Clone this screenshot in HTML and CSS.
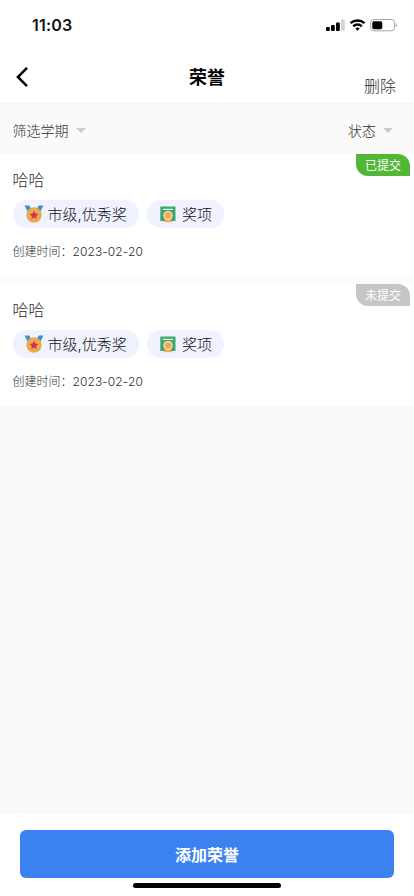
FILE: index.html
```html
<!DOCTYPE html>
<html lang="zh-CN">
<head>
<meta charset="UTF-8">
<meta name="viewport" content="width=device-width, initial-scale=1">
<title>荣誉</title>
<link rel="stylesheet" href="styles.css">
</head>
<body>
<svg width="0" height="0" class="defs">
  <symbol id="medal" viewBox="0 0 20 18">
    <path d="M.6.6h4.6l3.3 5.6-3.7 2.8z M19.4.6h-4.6l-3.3 5.6 3.7 2.8z" fill="#3d8fd1"/>
    <circle cx="10" cy="10" r="7.7" fill="#eba947"/>
    <path d="M10 5.8l1.3 2.7 3 .4-2.2 2.1.5 3-2.6-1.4-2.6 1.4.5-3-2.2-2.1 3-.4z" fill="#d12f59"/>
  </symbol>
  <symbol id="award" viewBox="0 0 16 17">
    <rect x=".3" y=".5" width="15.2" height="14.5" fill="#43a66c"/>
    <path d="M3 3.4h10" stroke="#e8f5ed" stroke-width="1.2"/>
    <path d="M5 12l-1 4.6 2.2-.8 1.8.8 1.8-.8 2.2.8-1-4.6z" fill="#f3a64b"/>
    <circle cx="8" cy="9.5" r="4.6" fill="#f7e5bd"/>
    <circle cx="8" cy="9.5" r="3.2" fill="#f3a64b"/>
  </symbol>
</svg>
<div class="screen">
  <div class="status-bar">
    <span class="clock">11:03</span>
    <svg class="indicators" width="72" height="14" viewBox="0 0 72 14">
      <g fill="#000">
        <rect x="0" y="9" width="3.8" height="4" rx="1"/>
        <rect x="5" y="7" width="3.8" height="6" rx="1"/>
        <rect x="10" y="4.5" width="3.8" height="8.5" rx="1"/>
      </g>
      <rect x="15" y="1.5" width="3.8" height="11.5" rx="1" fill="#d4d4d4"/>
      <g fill="none" stroke="#000" stroke-width="2.4">
        <path d="M24.5 5.2a10.3 10.3 0 0 1 14 0"/>
        <path d="M27.2 8.3a6.2 6.2 0 0 1 8.6 0"/>
      </g>
      <path d="M29.3 10.5a3.3 3.3 0 0 1 4.4 0l-2.2 2.3z"/>
      <rect x="44.6" y="1.5" width="24" height="11.3" rx="3.2" fill="none" stroke="#a6a6a6"/>
      <rect x="46.3" y="3.2" width="10" height="8" rx="1.7"/>
      <path d="M69.8 5.2c1.6.6 1.6 3.4 0 4z" fill="#a6a6a6"/>
    </svg>
  </div>
  <header class="nav">
    <svg class="back" width="14" height="22" viewBox="0 0 14 22"><path d="M12 1.9L2.9 11l9.1 9.1" fill="none" stroke="#000" stroke-width="2.5"/></svg>
    <h1>荣誉</h1>
    <span class="delete">删除</span>
  </header>
  <div class="filters">
    <span class="filter">筛选学期<i class="caret"></i></span>
    <span class="filter">状态<i class="caret"></i></span>
  </div>
  <main class="list">
    <article class="card">
      <span class="badge submitted">已提交</span>
      <h2>哈哈</h2>
      <div class="chips">
        <span class="chip level"><svg width="20" height="18"><use href="#medal"/></svg><span>市级,优秀奖</span></span>
        <span class="chip prize"><svg width="16" height="17"><use href="#award"/></svg><span>奖项</span></span>
      </div>
      <p class="date">创建时间：<span>2023-02-20</span></p>
    </article>
    <article class="card">
      <span class="badge">未提交</span>
      <h2>哈哈</h2>
      <div class="chips">
        <span class="chip level"><svg width="20" height="18"><use href="#medal"/></svg><span>市级,优秀奖</span></span>
        <span class="chip prize"><svg width="16" height="17"><use href="#award"/></svg><span>奖项</span></span>
      </div>
      <p class="date">创建时间：<span>2023-02-20</span></p>
    </article>
  </main>
  <footer class="footer">
    <button class="add">添加荣誉</button>
    <div class="home-indicator"></div>
  </footer>
</div>
</body>
</html>
```
FILE: styles.css
```css
* { box-sizing: border-box; margin: 0; padding: 0; }
body {
  background: #fff;
  color: #2c2c2c;
  font-family: Inter, "Noto Sans CJK SC", sans-serif;
  font-weight: 300;
}
svg { display: block; flex: none; }
.defs { position: absolute; }
.screen { display: flex; flex-direction: column; height: 896px; overflow: hidden; }
.status-bar {
  display: flex;
  align-items: center;
  justify-content: space-between;
  height: 50px;
  padding: 0 16px 0 32px;
}
.clock { color: #111; font-size: 16px; font-weight: 600; line-height: 20px; letter-spacing: .2px; }
.nav {
  display: grid;
  grid-template-columns: 1fr auto 1fr;
  align-items: center;
  height: 54px;
  padding: 0 18px 0 15px;
  border-bottom: 1px solid #f7f7f7;
}
h1 { font-size: 18px; font-weight: 700; line-height: 26px; color: #000; padding: 2px 0 0 3px; }
.delete { justify-self: end; font-size: 16px; line-height: 20px; padding-top: 18px; }
.filters {
  display: flex;
  justify-content: space-between;
  align-items: center;
  height: 50px;
  padding: 3px 21px 0 12.5px;
  background: #fafafa;
}
.filter { display: flex; align-items: center; gap: 7px; font-size: 14px; line-height: 20px; }
.caret { border: 5px solid transparent; border-top-color: #ccc; border-bottom: 0; }
.list { flex: 1; display: flex; flex-direction: column; gap: 8px; background: #fafafa; }
.card { position: relative; height: 122px; padding: 14px 12.5px 0; background: #fff; }
.badge {
  position: absolute;
  top: 0;
  right: 4px;
  width: 54px;
  height: 22px;
  border-radius: 0 12px 0 12px;
  background: #c6c6c6;
  color: #fff;
  font-size: 12px;
  font-weight: 400;
  line-height: 24px;
  text-align: center;
}
.submitted { background: #51b735; }
h2 { font-size: 16px; font-weight: 300; line-height: 24px; }
.chips { display: flex; gap: 8px; margin-top: 8px; }
.chip {
  display: flex;
  align-items: center;
  height: 28px;
  border-radius: 14px;
  background: #f0f2ff;
  color: #111;
  font-size: 15px;
  line-height: 24px;
  white-space: nowrap;
}
.chip span { padding-top: 2px; }
.level { width: 126.5px; padding-left: 11px; gap: 4px; }
.prize { width: 77px; padding-left: 13px; gap: 6px; }
.date { display: flex; margin-top: 15px; font-size: 12px; line-height: 18px; }
.date span { font-weight: 350; letter-spacing: .1px; }
.footer { height: 82px; padding: 16px 20px 0; background: #fff; }
.add {
  display: block;
  width: 100%;
  height: 48px;
  border: 0;
  border-radius: 6px;
  background: #3b82f0;
  color: #fff;
  font: 700 16px/24px "Noto Sans CJK SC", sans-serif;
}
.home-indicator { width: 148px; height: 5px; margin: 5px auto 0; border-radius: 3px; background: #000; }
```
